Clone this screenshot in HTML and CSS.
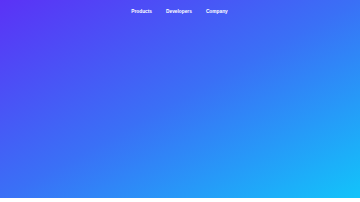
FILE: index.html
```html
<!DOCTYPE html>
<html lang="en">
<head>
    <meta charset="UTF-8">
    <meta name="viewport" content="width=device-width, initial-scale=1.0">
    <title>Home</title>
    <link rel="stylesheet" href="styles.css">
</head>
<body>
    <header class="hero">
        <nav class="nav">
            <a href="#" class="nav-link">Products</a>
            <a href="#" class="nav-link">Developers</a>
            <a href="#" class="nav-link">Company</a>
        </nav>
    </header>
</body>
</html>
```

FILE: styles.css
```css
/* Base styles */
* {
    margin: 0;
    padding: 0;
    box-sizing: border-box;
}

body {
    font-family: 'Liberation Sans', Arial, sans-serif;
    background: #fff;
}

/* Hero */
.hero {
    height: 198px;
    background: linear-gradient(to bottom right, #5b32f6, #3a70f6 50%, #12c4fa);
}

.nav {
    display: flex;
    justify-content: center;
    gap: 14px;
    padding-top: 9px;
    padding-right: 1px;
}

.nav-link {
    color: #fff;
    text-decoration: none;
    font-size: 4.8px;
    font-weight: bold;
    line-height: 6px;
}
```
